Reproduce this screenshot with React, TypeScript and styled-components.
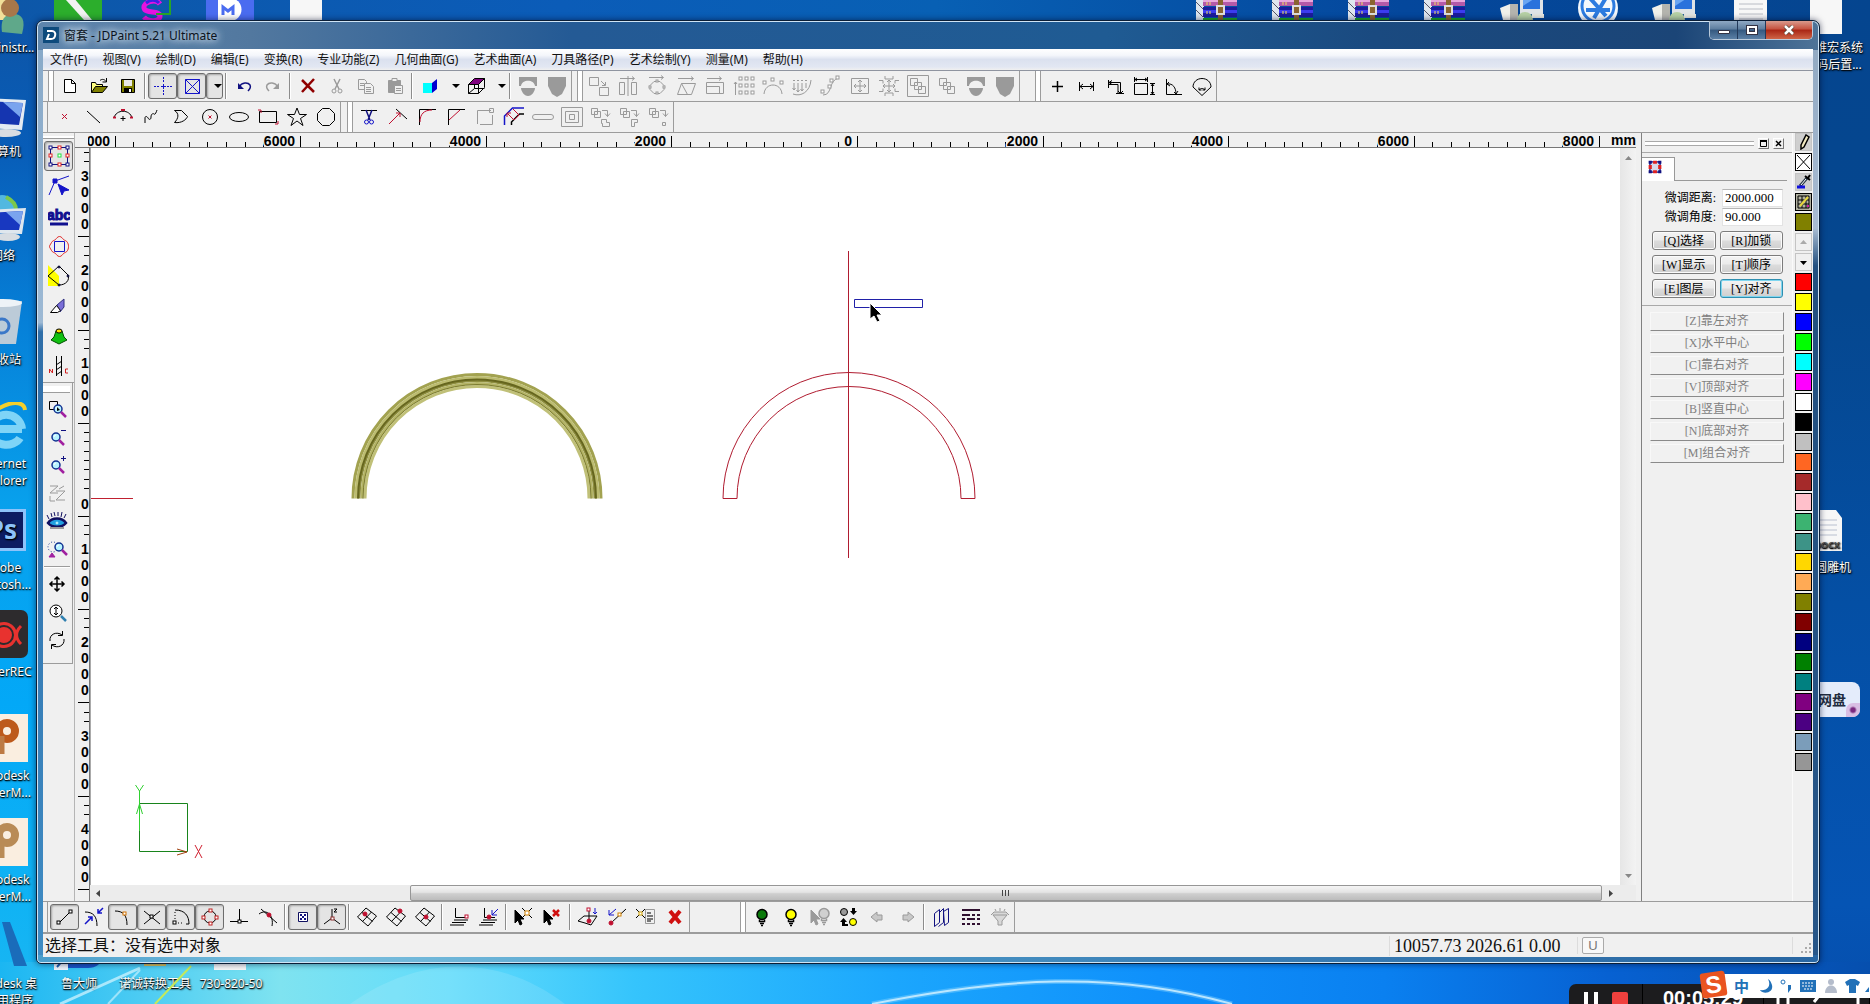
import React from "react";
import styled, { createGlobalStyle, css } from "styled-components";

const UI = `"Noto Sans", "Noto Sans CJK SC", sans-serif`;
const SONG = `"Liberation Serif", "Noto Sans CJK SC", serif`;
const FACE = "#f0f0f0";
const LINE = "#9c9c9c";

const GlobalStyle = createGlobalStyle`
  * { box-sizing: border-box; }
  html, body { margin: 0; height: 100%; overflow: hidden; }
  button, input { font: inherit; color: inherit; margin: 0; padding: 0; }
`;

/* ---------- desktop ---------- */

const Desktop = styled.div`
  position: relative;
  height: 100vh;
  overflow: hidden;
  font: 12px/17px ${UI};
  background:
    linear-gradient(90deg, #0d57a8 0, #0b5cb8 30%, #0860b4 50%, #04479c 75%, #05458f 100%) top / 100% 22px no-repeat,
    linear-gradient(90deg, #1bb6f2 0, #4fcdf3 8%, #7fe3f0 15%, #62dcfb 24%, #35c4fc 34%, #1ba6fd 48%, #0f90fb 62%, #0a80f0 74%, #0761d2 86%, #064fae 100%) bottom / 100% 42px no-repeat,
    linear-gradient(180deg, #0e54a5 0, #085db8 15%, #0680d8 32%, #08a0ec 50%, #03a8f7 70%, #10b3f4 90%, #1bb6f2 100%) left / 50% 100% no-repeat,
    linear-gradient(180deg, #05458f 0, #05478f 30%, #044fa4 60%, #0554b4 90%, #064fae 100%);
`;

const Streaks = styled.svg`
  position: absolute;
  left: 0;
  bottom: 0;
`;

const IconGrid = styled.div`
  display: grid;
  grid-template-columns: repeat(25, 76px);
  grid-template-rows: repeat(10, 104px);
  margin: -14px 0 0 -35px;
`;

const Shortcut = styled.a<{ $col: number; $row: number }>`
  grid-column: ${(p) => p.$col + 1};
  grid-row: ${(p) => p.$row + 1};
  display: flex;
  flex-direction: column;
  align-items: center;
  gap: 5px;
  color: #fff;
  text-align: center;
  text-decoration: none;
  white-space: pre;
  text-shadow: 1px 1px 2px #000, 0 1px 1px #000;
`;

const Pan = styled.div`
  position: absolute;
  right: 10px;
  top: 682px;
  width: 72px;
  height: 35px;
  display: flex;
  align-items: center;
  padding-left: 30px;
  border-radius: 8px;
  background: #e4ecfb;
  color: #222c40;
  font-size: 14px;
  font-weight: 700;
`;

const PanDot = styled.i`
  position: absolute;
  right: 0;
  bottom: 0;
  width: 14px;
  height: 14px;
  border-radius: 7px 0 7px 0;
  background: radial-gradient(circle, #7a2a80 0 2px, #d9bfe4 4px);
`;

/* ---------- window ---------- */

const Win = styled.main`
  position: absolute;
  inset: 20px 50px 40px 36px;
  display: flex;
  flex-direction: column;
  padding: 0 6px 6px;
  border: 1px solid #0b1e36;
  border-radius: 7px 7px 5px 5px;
  box-shadow: inset 0 0 0 1px #cfe4f5, 0 0 6px rgba(0, 10, 40, 0.6);
  background:
    linear-gradient(90deg, #5f86ad 0, #52789f 12%, #245a95 30%, #1f5b93 60%, #1a4a80 75%, #1b4577 92%, #4f7498 100%) top / 100% 29px no-repeat,
    linear-gradient(90deg, #4a9ecb 0, #7cc0de 15%, #4f9fcc 40%, #3a7fb6 65%, #2866a2 100%) bottom / 100% 8px no-repeat,
    linear-gradient(180deg, #86a8c8 0, #9db9d4 32%, #2f6ea8 33%, #3f8cc4 100%) left / 50% 100% no-repeat,
    linear-gradient(180deg, #8fa7c0 0, #a9bcd2 22%, #23507f 26%, #275688 100%);
`;

const TitleBar = styled.header`
  display: flex;
  align-items: center;
  gap: 5px;
  height: 28px;
  flex: none;
  color: #0b1320;
`;

const Title = styled.h1`
  flex: 1;
  margin: 0;
  font: 12px/17px ${UI};
  text-shadow: 0 0 6px #c5d6e6, 0 0 8px #c5d6e6, 0 0 10px #c5d6e6;
`;

const Caption = styled.div`
  display: flex;
  align-self: flex-start;
  border: 1px solid #b9c9da;
  border-top: 0;
  border-radius: 0 0 5px 5px;
  overflow: hidden;
`;

const CaptionButton = styled.button<{ $close?: boolean }>`
  display: grid;
  place-items: center;
  width: ${(p) => (p.$close ? 46 : 28)}px;
  height: 18px;
  border: 0;
  border-right: ${(p) => (p.$close ? 0 : 1)}px solid #22395a;
  background: ${(p) =>
    p.$close
      ? "linear-gradient(#d99a8c, #c5523f 45%, #a92514 50%, #cf6546)"
      : "linear-gradient(#8fa9c4, #5d7d9f 45%, #34587f 50%, #5b80a6)"};
`;

const MenuBar = styled.nav`
  display: flex;
  align-items: center;
  height: 22px;
  flex: none;
  border-bottom: 1px solid #8f94a0;
  background: linear-gradient(#fff, #f4f6fb 30%, #dbe1ef 50%, #e2e7f3 85%, #f0f0f0);
`;

const MenuItem = styled.button`
  padding: 0 8px 0 7px;
  border: 0;
  background: none;
  white-space: nowrap;
  color: #111;
`;

const ToolRow = styled.div<{ $start: number }>`
  display: flex;
  height: 31px;
  flex: none;
  padding-left: ${(p) => p.$start}px;
  border-bottom: 1px solid ${LINE};
  background: ${FACE};
`;

const ToolGroup = styled.div<{ $gap?: number }>`
  display: flex;
  align-items: center;
  margin-left: ${(p) => p.$gap ?? 0}px;
  border-right: 1px solid ${LINE};
`;

const Grip = styled.i<{ $single?: boolean }>`
  align-self: stretch;
  width: ${(p) => (p.$single ? 1 : 6)}px;
  margin-right: ${(p) => (p.$single ? 2 : 1)}px;
  border: solid ${LINE};
  border-width: 0 1px 0 ${(p) => (p.$single ? 0 : 1)}px;
  background: #fff;
`;

const Sep = styled.i`
  width: 6px;
  height: 26px;
  background: linear-gradient(90deg, transparent 2px, #8c8c8c 2px 3px, #fff 3px 4px, transparent 4px);
`;

const ToolButton = styled.button<{ $on?: boolean; $w?: number; $h?: number }>`
  display: grid;
  place-items: center;
  flex: none;
  width: ${(p) => p.$w ?? 29}px;
  height: ${(p) => p.$h ?? 26}px;
  border: 1px solid transparent;
  border-radius: 3px;
  background: none;
  ${(p) =>
    p.$on &&
    css`
      border-color: #6d6d6d;
      background: #e4e4e4;
      box-shadow: inset 1px 1px 2px #a5a5a5;
    `}
`;

const Work = styled.div`
  display: flex;
  flex: 1;
  min-height: 0;
  background: ${FACE};
  border-bottom: 1px solid ${LINE};
`;

const LeftBar = styled.div`
  width: 32px;
  flex: none;
  border-right: 1px solid #b5b5b5;
`;

const SideTools = styled.div<{ $second?: boolean }>`
  display: flex;
  flex-direction: column;
  align-items: center;
  width: ${(p) => (p.$second ? 30 : 31)}px;
  padding: ${(p) => (p.$second ? "0 2px 9px 0" : "0 0 1px")};
  border-bottom: 1px solid ${LINE};
  border-right: ${(p) => (p.$second ? 1 : 0)}px solid ${LINE};
`;

const SideGrip = styled.i<{ $top: number }>`
  align-self: stretch;
  height: ${(p) => p.$top}px;
  margin-bottom: 2px;
  background: linear-gradient(${FACE} 3px, #fff 3px);
  border-bottom: 1px solid ${LINE};
`;

const SideSep = styled.i`
  width: 26px;
  height: 7px;
  background: linear-gradient(transparent 3px, ${LINE} 3px 4px, #fff 4px 5px, transparent 5px);
`;

const Viewport = styled.section`
  display: grid;
  flex: 1;
  min-width: 0;
  grid-template: 15px 1fr 16px / 15px 1fr 16px;
  padding-right: 5px;
`;

const TopRuler = styled.div`
  grid-column: 1 / 4;
  display: flex;
  padding-left: 13px;
  background: ${FACE};
  border-bottom: 1px solid #777;
  font: bold 14px/14px "Liberation Sans", sans-serif;
  overflow: hidden;
`;

const SideRuler = styled.svg`
  grid-row: 2 / 4;
  width: 15px;
  height: 100%;
  border-right: 1px solid #777;
`;

const Canvas = styled.div`
  position: relative;
  overflow: hidden;
  background: #fff;
  border-left: 1px solid #aaa;
`;

const Drawing = styled.svg`
  display: block;
  width: 100%;
  height: 100%;
`;

const AxisMark = styled.svg`
  position: absolute;
  left: 38px;
  bottom: 20px;
`;

const VScroll = styled.div`
  display: flex;
  flex-direction: column;
  justify-content: space-between;
  align-items: center;
  padding: 2px 0;
  background: linear-gradient(90deg, #e6e6e6, #f3f3f3);
`;

const HScroll = styled.div`
  grid-column: 2 / 4;
  display: flex;
  padding-right: 18px;
  background: #ececec;
`;

const ArrowButton = styled.button`
  display: grid;
  place-items: center;
  width: 16px;
  height: 16px;
  border: 0;
  background: none;
`;

const Track = styled.div`
  flex: 304;
`;

const Thumb = styled.div`
  flex: 1191;
  display: flex;
  justify-content: center;
  align-items: center;
  gap: 2px;
  border: 1px solid #969696;
  border-radius: 2px;
  background: linear-gradient(#f5f5f5, #e4e4e4 45%, #cfcfcf 55%, #bcbcbc);
`;

const ThumbLine = styled.i`
  width: 1px;
  height: 6px;
  background: #444;
`;

/* ---------- right panel ---------- */

const Panel = styled.aside`
  width: 151px;
  flex: none;
  border-left: 1px solid #808080;
  font: 12px/18px ${SONG};
`;

const PanelHead = styled.div`
  display: flex;
  align-items: center;
  gap: 4px;
  height: 20px;
  padding: 2px 8px 0 3px;
  border-bottom: 1px solid #a9a9a9;
`;

const PanelGrip = styled.i`
  flex: 1;
  height: 5px;
  border: solid #a9a9a9;
  border-width: 1px 0;
  background: #fff;
`;

const TinyButton = styled.button`
  display: grid;
  place-items: center;
  width: 11px;
  height: 11px;
  border: 1px solid #fff;
  border-right-color: #777;
  border-bottom-color: #777;
  background: ${FACE};
`;

const TabStrip = styled.div`
  display: flex;
  height: 28px;
  padding-top: 4px;
  margin-right: 5px;
`;

const Tab = styled.button`
  width: 33px;
  height: 24px;
  padding: 0 6px;
  border: 1px solid #999;
  border-width: 1px 1px 0 0;
  background: #fff;
  text-align: left;
`;

const TabRest = styled.i`
  flex: 1;
  border-bottom: 1px solid #999;
`;

const Form = styled.div`
  display: grid;
  grid-template-columns: 1fr 61px;
  align-items: center;
  gap: 1px 6px;
  padding: 8px 9px 0 20px;
`;

const FormLabel = styled.label`
  text-align: right;
  white-space: nowrap;
`;

const Field = styled.input`
  width: 61px;
  height: 18px;
  padding: 0 2px;
  border: 1px solid #e3e3e3;
  border-top-color: #b5b5b5;
  background: #fff;
  font: 13px/16px ${SONG};
`;

const ButtonGrid = styled.div`
  display: grid;
  grid-template-columns: 1fr 1fr;
  gap: 5px 4px;
  padding: 5px 9px 7px 10px;
  border-bottom: 1px solid #a9a9a9;
`;

const PushButton = styled.button<{ $active?: boolean }>`
  height: 19px;
  border: 1px solid ${(p) => (p.$active ? "#2f8fb0" : "#7c7c7c")};
  border-radius: 3px;
  box-shadow: inset 0 0 0 1px ${(p) => (p.$active ? "#7fd6f0" : "#fbfbfb")};
  background: linear-gradient(#f3f3f3, #ebebeb 48%, #dcdcdc 52%, #cfcfcf);
  line-height: 16px;
  white-space: nowrap;
`;

const AlignList = styled.div`
  display: flex;
  flex-direction: column;
  gap: 3px;
  padding: 6px 8px;
`;

const AlignButton = styled.button`
  height: 19px;
  border: 1px solid #f8f8f8;
  border-right-color: #8a8a8a;
  border-bottom-color: #8a8a8a;
  background: #f1f1f1;
  color: #808080;
  line-height: 17px;
`;

const Palette = styled.div`
  display: flex;
  flex-direction: column;
  align-items: center;
  gap: 2px;
  width: 21px;
  flex: none;
  border-left: 1px solid #fafafa;
`;

const Swatch = styled.button<{ $color: string; $plain?: boolean }>`
  display: grid;
  place-items: center;
  width: 17px;
  height: 18px;
  border: 1px solid ${(p) => (p.$plain ? "#c4c4c4" : "#000")};
  background: ${(p) => p.$color};
`;

/* ---------- status ---------- */

const StatusBar = styled.footer`
  display: flex;
  align-items: center;
  height: 24px;
  flex: none;
  border-top: 1px solid ${LINE};
  background: ${FACE};
  font: 16px/20px ${SONG};
  color: #111;
`;

const StatusText = styled.span`
  flex: 1;
  padding-left: 2px;
`;

const Coords = styled.span`
  width: 188px;
  padding-left: 4px;
  border-left: 1px solid #dcdcdc;
  font-size: 18px;
  white-space: nowrap;
`;

const StatusKey = styled.span`
  width: 216px;
  padding-left: 4px;
  border: solid #dcdcdc;
  border-width: 0 1px;
`;

const Key = styled.kbd`
  display: grid;
  place-items: center;
  width: 22px;
  height: 17px;
  border: 1px solid #aaa;
  border-radius: 2px;
  background: #f8f8f8;
  color: #777;
  font: 13px/14px "Liberation Sans", sans-serif;
`;

const SizeGrip = styled.svg`
  width: 20px;
  height: 20px;
`;

/* ---------- recorder and input method ---------- */

const Recorder = styled.div`
  position: absolute;
  right: 0;
  bottom: 0;
  width: 301px;
  height: 20px;
  display: flex;
  align-items: flex-start;
  overflow: hidden;
  border-radius: 7px 0 0 0;
  background: #1c1c1e;
  color: #fff;
  font: bold 20px/20px "Liberation Sans", sans-serif;
`;

const RecorderPart = styled.div<{ $w: number }>`
  display: flex;
  gap: 14px;
  justify-content: center;
  align-items: flex-start;
  width: ${(p) => p.$w}px;
  height: 20px;
  padding-top: 4px;
  border-right: 1px solid #000;
`;

const PauseMark = styled.i`
  width: 14px;
  height: 20px;
  margin-top: 4px;
  border: solid #fff;
  border-width: 0 4px;
`;

const StopMark = styled.i`
  width: 16px;
  height: 20px;
  margin-top: 4px;
  border-radius: 2px;
  background: #f0413e;
`;

const ImeBar = styled.div`
  position: absolute;
  right: 0;
  bottom: 6px;
  width: 160px;
  height: 24px;
  display: flex;
  align-items: center;
  justify-content: space-between;
  padding-left: 24px;
  background: #fff;
  color: #2271b8;
  font-size: 15px;
  font-weight: 700;
`;

const ImeLogo = styled.div`
  position: absolute;
  left: -9px;
  top: -2px;
  width: 25px;
  height: 25px;
  display: grid;
  place-items: center;
  border-radius: 3px;
  background: #ea5420;
  color: #fff;
  font: bold 24px/24px "Liberation Sans", sans-serif;
  transform: rotate(-8deg);
`;

/* ---------- tool icons ---------- */

const G = "#9a9a9a";
const B = "#1414c8";
const R = "#c01030";
const sq = (x: number, y: number, c = "#000", s = 3) => (
  <rect key={`${x}-${y}`} x={x} y={y} width={s} height={s} fill="#fff" stroke={c} />
);
const dot = (x: number, y: number, c = R, r = 2) => <circle cx={x} cy={y} r={r} fill={c} stroke={c} />;
const bulb = (c: string, s = "#000") => (
  <g stroke={s}>
    <circle cx="11" cy="8.500" r="5" fill={c} strokeWidth="1.500" />
    <path d="M8.500 13.500v2h5v-2M9 17.500h4M10 19.500h2" strokeWidth="1.500" />
  </g>
);
const mesh = (x: number, y: number) => (
  <g>
    <path d="M1.500 11 10 2l10.500 8L12 20zM6 6.500l10.500 9M6.500 15.500 15.500 6" />
    {dot(x, y)}
  </g>
);
const cursorPath = "M2 4v13l3-3 2 5 2-1-2-5h4z";
const lens = (cx: number, cy: number) => (
  <g>
    <circle cx={cx} cy={cy} r="4" fill="#b8f4ff" stroke="#103090" strokeWidth="1.500" />
    <path d={`M${cx - 2} ${cy}a2 2 0 0 1 2-2`} stroke="#fff" />
    <path d={`M${cx + 3} ${cy + 3}l5 5`} stroke="#a020a0" strokeWidth="2.500" />
  </g>
);
const half = (
  <g stroke="none" fill={G}>
    <path d="M2 2h18v9h-2c-1-7-13-7-14 0H2z" />
    <path d="M4 13h14c0 3-3 8-7 8s-7-5-7-8z" />
  </g>
);
const shield = <path d="M2 2h18v9l-4 8-5 3-5-3-4-8z" fill={G} stroke="none" />;
const boxes = (c: string) => (
  <g stroke={c}>
    <path d="M3.500 3.500h7v7h-7zM7.500 7.500h7v7h-7zM11.500 11.500h7v7h-7z" />
  </g>
);
const combine = (last: string) => (
  <g stroke={G}>
    <path d="M1.500 2.500h6v6h-6zM4.500 5.500h6v6h-6zM12 4.500h5.500v6M15 7.500l2.500 3 2.500-3" />
    <path d={last} />
  </g>
);

const icons: Record<string, React.ReactNode> = {
  new: <path d="M5.500 4.500h7l4 4v9h-11zM12.500 4.500v4h4" fill="#fff" />,
  open: (
    <g>
      <path d="M3.500 17.500v-10h4l1 2h6v3" fill="#ffff80" />
      <path d="M3.500 17.500l4-6h12l-5 6z" fill="#808000" />
      <path d="M12 5.500c2-2 5-1 6 1M18.500 3v4h-4" />
    </g>
  ),
  save: (
    <g>
      <path d="M4.500 4.500h13v13h-13z" fill="#808000" />
      <path d="M7 5h8v6H7z" fill="#e8e8e8" stroke="none" />
      <path d="M7 13h8v5H7z" fill="#000" stroke="none" />
      <path d="M12 14h2v3h-2z" fill="#fff" stroke="none" />
    </g>
  ),
  cross: (
    <g stroke={B}>
      <path d="M2 11.500h6M15 11.500h6M11.500 2v6M11.500 15v6" strokeDasharray="2 1" />
      <path d="M9 11.500h5M11.500 9v5" />
    </g>
  ),
  boxx: <path d="M4.500 4.500h14v14h-14zM4.500 4.500l14 14M18.500 4.500l-14 14" stroke={B} />,
  drop: <path d="M7 9h8l-4 4z" fill="#000" stroke="none" />,
  undo: (
    <g stroke="#101080">
      <path d="M6 12c3-5 9-5 11-2 1 2 0 4-2 6" strokeWidth="1.500" />
      <path d="M5 8v6h6z" fill="#101080" stroke="none" />
    </g>
  ),
  redo: (
    <g stroke={G}>
      <path d="M16 12c-3-5-9-5-11-2-1 2 0 4 2 6" strokeWidth="1.500" />
      <path d="M17 8v6h-6z" fill={G} stroke="none" />
    </g>
  ),
  del: <path d="M5 5l12 12M17 4 5 17" stroke="#900000" strokeWidth="2.500" />,
  cut: (
    <g stroke={G}>
      <path d="M8 4l5 10M14 4 9 14" strokeWidth="1.500" />
      <circle cx="8" cy="16" r="2" />
      <circle cx="14" cy="16" r="2" />
    </g>
  ),
  copy: (
    <g stroke={G} fill={FACE}>
      <path d="M3.500 4.500h6l2 2v8h-8zM5 8.500h4M5 10.500h4" />
      <path d="M9.500 8.500h6l3 3v7h-9zM11 12.500h5M11 14.500h5M11 16.500h5" />
    </g>
  ),
  paste: (
    <g stroke={G}>
      <path d="M4.500 5.500h12v12h-12z" fill={G} />
      <path d="M8 3.500h5v3H8z" fill={FACE} />
      <path d="M10.500 10.500h8v8h-8zM12 13.500h5M12 15.500h5" fill={FACE} />
    </g>
  ),
  solid: (
    <g stroke="none">
      <path d="M4 8h9v10H4z" fill="#00ffff" />
      <path d="M13 8l5-4v10l-5 4z" fill="#0000d0" />
    </g>
  ),
  cube: (
    <g>
      <path d="M3.500 9.500l6-6h10l-6 6z" fill="#800080" />
      <path d="M3.500 9.500h10v9h-10zM13.500 9.500l6-6v9l-6 6M9.500 9.500v4h10M3.500 18.500l6-5" />
    </g>
  ),
  half,
  shield,
  move: <path d="M1.500 2.500h9v8h-9zM11.500 12.500h9v8h-9zM13 6l4 4M17.500 7v3.500H14" stroke={G} />,
  mirror: <path d="M2.500 7.500h5v12h-5zM14.500 7.500h5v12h-5zM11 1v20M3 3.500h14M15 1.500l2.500 2-2.500 2" stroke={G} />,
  spin: (
    <g stroke={G}>
      <path d="M8 6.500h6l4 4v4l-4 4H8l-4-4v-4zM3 2.500h14M15 .5l2.500 2-2.500 2" />
      {[[10, 5], [10, 17], [3, 11], [17, 11]].map(([x, y]) => sq(x, y, G, 2))}
    </g>
  ),
  skew: <path d="M2.500 19.500l4-11h14l-4 11zM6.500 8.500l6 11 M3 3.500h15M16 1.500l2.500 2-2.500 2" stroke={G} />,
  scale: <path d="M2.500 7.500h17v11h-17zM2.500 11.500h13v7M3 3.500h14M15 1.500l2.500 2-2.500 2" stroke={G} />,
  array: (
    <g stroke={G}>
      {[6, 12, 18].map((x) => [2, 9, 16].map((y) => sq(x, y, G, 3)))}
      <path d="M2.500 20V7M1 9l1.500-2L4 9" />
    </g>
  ),
  arcarr: (
    <g stroke={G}>
      <path d="M2 19c1-12 17-12 18 0" />
      {[[1, 6], [9, 3], [18, 6]].map(([x, y]) => sq(x, y, G))}
    </g>
  ),
  weave: <path d="M3 8v7M7 8v9M11 8v8M15 8v5M2 19c8 3 17-2 18-14M2 5.500h2M6 5.500h2M10 5.500h2M14 5.500h2M1.500 13l1.500 2 1.500-2M5.500 15 7 17l1.500-2M9.500 14l1.500 2 1.500-2" stroke={G} />,
  curve: (
    <g stroke={G}>
      <path d="M3 20c10 0 5-15 16-17" />
      {[[1, 15], [8, 10], [10, 4], [16, 1]].map(([x, y]) => sq(x, y, G))}
    </g>
  ),
  fit: <path d="M2.500 3.500h17v15h-17zM5 11h12M11 5v12M7 9l-2 2 2 2M15 9l2 2-2 2M9 7l2-2 2 2M9 15l2 2 2-2" stroke={G} />,
  shrink: <path d="M1 5.500h4v3M1 16.500h4v-3M21 5.500h-4v3M21 16.500h-4v-3M7 1v3h8V1M7 21v-3h8v3M5 11h12M11 5v12M7 9l-2 2 2 2M15 9l2 2-2 2M9 7l2-2 2 2M9 15l2 2 2-2" stroke={G} />,
  group: (
    <g>
      <path d="M.5.5h21v21H.5z" stroke={G} />
      {boxes(G)}
    </g>
  ),
  ungroup: boxes(G),
  plus: <path d="M6 11.500h11M11.500 6v11" strokeWidth="1.500" />,
  dimh: <path d="M4.500 7v9M18.500 7v9M5 11.500h13M8 9l-3 2.500L8 14M15 9l3 2.500L15 14" />,
  dimz: <path d="M4.500 5v8M5 7.500h11.500V18M5 9.500h9v9M8 5.500l-3 2L8 9.500M12 18.500h8M14 16l2.500 2.500L19 16" />,
  dimr: <path d="M1.500 8.500h13v11h-13zM1.500 2v5M14.500 2v5M2 4.500h12M4 3 2 4.500 4 6M12 3l2 1.500L12 6M17 8.500h5M17 19.500h5M19.500 9v10M18 11l1.500-2L21 11M18 17l1.500 2 1.500-2" />,
  dima: <path d="M4.500 4v15.500H20M5 9c6-1 9 4 9 10M7 7 5 9l3 2M12 17l2 2 2-3" />,
  dimc: <path d="M11 20.500 2 12c0-5 4-8.500 9-8.500s9 3.500 9 8.500zM8 15c2-2 4-2 6 0M8 12.500V15h2.500M14 12.500V15h-2.500" />,

  pt: <path d="M8 8l5 5M13 8l-5 5" stroke={R} />,
  line: <path d="M4 5l13 12" />,
  arc: (
    <g>
      <path d="M2 12c2-9 16-9 18 0M11 10v5M8.500 12.500h5" />
      <path d="M1 11.500h3M18 11.500h3M9 4h4" stroke={R} strokeWidth="2" />
    </g>
  ),
  spline: <path d="M4 17v-5c0-2 2-2 3 0s3 2 3-1 2-4 3-3 2-1 3-4" />,
  poly: <path d="M4.500 4.500h7l6 6c-1 3-6 7-13 6 4-4 5-9 0-12" />,
  circle: (
    <g>
      <circle cx="11" cy="11" r="7.500" />
      <path d="M9.500 9.500l3 3M12.500 9.500l-3 3" stroke={R} />
    </g>
  ),
  ellipse: <ellipse cx="11" cy="11" rx="9.500" ry="4.500" />,
  rect: (
    <g>
      <path d="M2.500 5.500h17v11h-17z" />
      <path d="M1 4h3v3M18 18h3v-3" stroke={R} />
    </g>
  ),
  star: <path d="M11 2l2.500 6.500h7l-6 4 2.500 7-6-4.500-6 4.500 2.500-7-6-4h7z" />,
  octo: <path d="M7.500 2.500h7l5 5v7l-5 5h-7l-5-5v-7z" />,
  trim: (
    <g>
      <path d="M3 4.500h16" />
      <path d="M8 4l4 10M14 4l-4 10" stroke="#101080" strokeWidth="1.500" />
      <circle cx="8.500" cy="16" r="2" stroke={B} />
      <circle cx="13.500" cy="16" r="2" stroke={B} />
    </g>
  ),
  extend: (
    <g>
      <path d="M9 3l11 10" />
      <path d="M2 18 13 7M9 7h4v4" stroke={R} />
    </g>
  ),
  fillet: (
    <g>
      <path d="M3.500 19V3.500H20" />
      <path d="M4 16c0-8 4-12 12-12" stroke={R} />
    </g>
  ),
  chamfer: (
    <g>
      <path d="M3.500 19V3.500H20" />
      <path d="M4 14 15 4" stroke={R} />
    </g>
  ),
  corner: <path d="M3.500 18V4.500H17M6 18.500h12.500V9M15.500 2.500h4v4h-4z" stroke={G} />,
  offset: (
    <g>
      <path d="M1.500 19v-9l8-8H21" stroke={B} strokeWidth="1.500" />
      <path d="M8.500 19v-3l8-8H21" strokeWidth="1.500" />
      <path d="M5 8l6 6 5-5-6-6M4 11V7h4" stroke={R} />
    </g>
  ),
  slot: <rect x=".5" y="8.500" width="21" height="5" rx="2.500" stroke={G} />,
  nest: <path d="M.5 1.500h21v19H.5zM4.500 5.500h13v11h-13zM8.500 8.500h5v5h-5z" stroke={G} />,
  uni: combine("M11.500 13.500h5v3h3v4h-7v-3h-1z"),
  sub: combine("M12.500 13.500h6v3h-3v4h-3z"),
  inter: combine("M14.500 16.500h3v3h-3z"),

  select: (
    <g>
      <path d="M2.500 2.500h17v17h-17z" stroke="#101080" />
      {[[1, 1], [18, 1], [1, 18], [18, 18]].map(([x, y]) => sq(x, y, "#101080"))}
      {[[10, 1], [1, 9], [18, 9], [10, 18]].map(([x, y]) => sq(x, y, "#e02020"))}
      {sq(10, 9, "#20e040")}
    </g>
  ),
  node: (
    <g stroke={B}>
      <path d="M1 20 7 6l14-5" />
      <path d="M5 4h4v4H5z" fill={B} />
      <path d="M10 9l11 6-5 1-2 4z" fill={B} />
    </g>
  ),
  abc: (
    <g>
      <text x="11" y="15" textAnchor="middle" fontFamily="Liberation Sans" fontWeight="bold" fontSize="14" fill="#101090" stroke="#101090">abc</text>
      <path d="M2 19h18" stroke="#101090" strokeWidth="3" />
    </g>
  ),
  region: (
    <g>
      <path d="M6.500 6.500h10v10h-10z" stroke={B} />
      <path d="M11.500 1.500c2 0 3 2 4 3s3 1 4 3 1 3 1 4 0 2-1 4-3 2-4 3-2 3-4 3-3-2-4-3-3-1-4-3-2-3-2-4 1-2 2-4 3-2 4-3 2-3 4-3z" stroke="#e02020" />
    </g>
  ),
  shape: (
    <g>
      <path d="M0 0l11 11v10H0z" fill="#ffff00" stroke="none" />
      <path d="M0 11 11 1l9 9c2 5-2 10-9 10z" />
      {dot(11, 2, "#101040", 1)}
      {dot(20, 11, "#101040", 1)}
      {dot(11, 20, "#101040", 1)}
    </g>
  ),
  knife: (
    <g>
      <path d="M9 10l7-6v8l-4 5z" fill="#7a6ed8" stroke="#303080" />
      <path d="M2.500 17.500l6-7 4 5-3 2z" fill="#fff" />
    </g>
  ),
  cone: (
    <g>
      <path d="M8 6h6l2 6 3 3-8 4-8-4 3-3z" fill="#10c010" stroke="#005000" />
      <ellipse cx="11" cy="6" rx="3" ry="2" fill="#ffe000" />
    </g>
  ),
  drill: (
    <g>
      <path d="M8.500 1v20M13.500 1v20M8 10l6-4M8 15l6-4M8 20l6-4" />
      <path d="M1.500 18v-4l3 4v-4M20 14h-2.500v4H20" stroke="#d02020" />
    </g>
  ),
  zwin: (
    <g>
      <path d="M3.500 3.500h8v8h-8z" />
      {lens(12, 11)}
      <path d="M11 9v4l3-1z" fill="#000" stroke="none" />
    </g>
  ),
  zout: (
    <g>
      {lens(10, 11)}
      <path d="M15 4.500h5" stroke="#101080" />
    </g>
  ),
  zin: (
    <g>
      {lens(10, 11)}
      <path d="M15 4.500h5M17.500 2v5" stroke="#101080" />
    </g>
  ),
  zz: <path d="M4 4h8l-8 7h8M10 9h9l-9 9h9M18 4l-5 3M4 14v5h5" stroke={G} />,
  eye: (
    <g>
      <path d="M2 13c4-6 14-6 18 0-4 5-14 5-18 0z" fill="#20a0e0" stroke="#101060" strokeWidth="2.500" />
      {dot(11, 13, "#b8f4ff", 1)}
      <path d="M3 9 1 5M6 7 5 3M9 6 8 2M12 6V2M15 7l1-5M18 8l2-4" stroke="#101060" />
      <path d="M4 18h14" stroke={G} strokeWidth="2" />
    </g>
  ),
  zdoc: (
    <g>
      <circle cx="7" cy="9" r="5" strokeDasharray="1 2" stroke="#103090" />
      {lens(13, 9)}
      <path d="M3 19l3-4 3 4z" fill="#a020a0" stroke="#a020a0" />
    </g>
  ),
  pan: <path d="M4 11h14M11 4v14M6.500 8.500 4 11l2.500 2.500M15.500 8.500 18 11l-2.500 2.500M8.500 6.500 11 4l2.500 2.500M8.500 15.500 11 18l2.500-2.500" strokeWidth="1.500" />,
  zdyn: (
    <g>
      <circle cx="10" cy="10" r="6" fill="#fff" />
      <path d="M10 6v8M8 8l2-2 2 2M8 12l2 2 2-2" />
      <path d="M15 15l5 5" stroke="#3080b0" strokeWidth="2.500" />
    </g>
  ),
  rot: <path d="M4 12c-1-7 7-10 12-6M18 10c1 7-7 10-12 6M16.500 2v4.500H12M5.500 20v-4.500H10" />,

  sEnd: (
    <g>
      <path d="M5 17 17 5" />
      {sq(3, 15)}
      {sq(15, 4)}
    </g>
  ),
  sNear: (
    <g>
      <path d="M2 6c8 0 12 4 12 14" />
      <path d="M2 18l7-7M5 11h4v4M20 2l-5 5M15 3v4h4" stroke={B} strokeWidth="1.500" />
    </g>
  ),
  sQuad: (
    <g>
      <path d="M3 5c8 0 12 4 12 14" />
      {sq(11, 6, "#d07000", 3)}
    </g>
  ),
  sInt: (
    <g>
      <path d="M3 5l16 13M3 18 19 5" />
      {sq(9, 9)}
    </g>
  ),
  sCen: (
    <g>
      <path d="M5 4c10 0 14 6 14 14h-3" />
      <path d="M5 6v8M8 17h6" strokeDasharray="1 2" />
      {sq(3, 15)}
    </g>
  ),
  sCirc: (
    <g>
      <circle cx="11" cy="11" r="6" />
      {[[10, 3], [10, 16], [3, 10], [16, 10]].map(([x, y]) => sq(x, y, "#c02020", 3))}
    </g>
  ),
  sPerp: (
    <g>
      <path d="M11.500 3v12M2 15.500h18" />
      {sq(10, 14)}
    </g>
  ),
  sTan: (
    <g>
      <path d="M2 8c8-6 15 2 13 12M4 3l16 14" />
      {dot(12, 9)}
    </g>
  ),
  grid: (
    <g>
      <path d="M6.500 6.500h9v9h-9z" stroke="#101060" fill="#fff" />
      <path d="M8 8h2v2H8zM12 8h2v2h-2zM10 10h2v2h-2zM8 12h2v2H8zM12 12h2v2h-2z" fill="#101080" stroke="none" />
    </g>
  ),
  axes: (
    <g>
      <path d="M11 3v9l-8 6M11 12l8 6M13 3h3l-3 3h3" />
      {sq(10, 11, "#903030")}
    </g>
  ),
  mesh1: mesh(9, 8),
  mesh2: mesh(15, 5),
  mesh3: mesh(12, 11),
  layers1: (
    <g>
      <path d="M6.500 2v9.500H17M5 14h14M3 16.500h14M1 19h14" />
      {sq(16, 9, R)}
    </g>
  ),
  layers2: (
    <g>
      <path d="M6.500 2v9.500H17M5 14h14M3 16.500h14M1 19h14" />
      <path d="M20 3l-6 6M14 4v5h5" stroke={B} />
      {dot(11, 11)}
    </g>
  ),
  pick: (
    <g>
      <path d={cursorPath} fill="#000" />
      <path d="M9 2l10 10M19 2 9 12" />
      {sq(12, 5, "#d08000", 4)}
    </g>
  ),
  unpick: (
    <g>
      <path d={cursorPath} fill="#000" />
      <path d="M11 4l6 6M17 4l-6 6" stroke="#d01010" strokeWidth="2.500" />
    </g>
  ),
  proj: (
    <g>
      <path d="M1 15l6-5h13l-6 9-6-2zM12 5v10" />
      <path d="M18 2v6M16 6l2 2 2-2" stroke={B} />
      {dot(12, 15)}
      {sq(10, 2, R)}
    </g>
  ),
  along: (
    <g>
      <path d="M5 17 20 3" />
      <path d="M10 3 3 9M3 4v5h5" stroke={B} />
      {dot(5, 17)}
      {sq(12, 7, "#d08000")}
    </g>
  ),
  listp: (
    <g>
      <path d="M1 3l9 9M10 3l-9 9" />
      {sq(4, 6, "#d0a000")}
      <path d="M10.500 3.500h9v14h-9z" stroke={G} fill={FACE} />
      <path d="M12 7h4M12 10h6M12 13h6M12 15h4" />
    </g>
  ),
  bigx: <path d="M6 5l10 12M16 5 6 17" stroke="#d01010" strokeWidth="4" />,
  bulbg: bulb("#0b7a0b"),
  bulby: bulb("#ffff00"),
  bulbp: (
    <g>
      <path d={cursorPath} fill={G} stroke={G} />
      <g transform="translate(4 -1)">{bulb("#d0d0d0", G)}</g>
    </g>
  ),
  swap: (
    <g>
      <circle cx="6" cy="6" r="3.500" fill="#999" />
      <circle cx="15" cy="16" r="3.500" fill="#ffff00" />
      <path d="M12 5h2V2h3v3h2l-3.500 4zM2 16l3.500-4L9 16H7v2h3v2H4v-4z" fill="#000" stroke="none" />
    </g>
  ),
  back: <path d="M4 11l6-5v3h5v5h-5v2z" stroke={G} fill="#c8c8c8" />,
  fwd: <path d="M18 11l-6-5v3H7v5h5v2z" stroke={G} fill="#c8c8c8" />,
  books: <path d="M3.500 7.500l5-4v13l-5 4zM8.500 6.500l4-4v14l-5 4M12.500 5.500l5-3v14l-4 3z" stroke="#101080" />,
  dash: <path d="M2 4h18M2 9h8M12 9h3M17 9h3M2 13h3M7 13h8M17 13h3M2 18h3M7 18h3M12 18h3M17 18h3" strokeWidth="2" stroke="#301030" />,
  filter: <path d="M4 9h14l-5 6v4h-4v-4zM2 9l3-3h12l3 3M11 2v3M6 3l1 2M16 3l-1 2" stroke={G} fill="#d8d8d8" />,
};

const Svg22 = ({ name }: { name: string }) => (
  <svg width="22" height="22" viewBox="0 0 22 22" fill="none" stroke="#000" strokeWidth="1" aria-hidden="true">
    {icons[name]}
  </svg>
);

/** Tool names: "|" is a divider, a leading "*" is a pressed tool, "drop" is a narrow arrow. */
const Tools = ({ names }: { names: string }) => (
  <>
    {names.split(" ").map((raw, i) => {
      if (raw === "|") return <Sep key={i} />;
      const on = raw[0] === "*";
      const name = on ? raw.slice(1) : raw;
      return (
        <ToolButton key={i} $on={on} $w={name === "drop" ? 17 : 29} aria-label={name} aria-pressed={on}>
          <Svg22 name={name} />
        </ToolButton>
      );
    })}
  </>
);

const SideButtons = ({ names, height }: { names: string; height: number }) => (
  <>
    {names.split(" ").map((raw) => {
      const on = raw[0] === "*";
      const name = on ? raw.slice(1) : raw;
      return (
        <ToolButton key={name} $on={on} $h={height} aria-label={name} aria-pressed={on}>
          <Svg22 name={name} />
        </ToolButton>
      );
    })}
  </>
);

const Arrow = ({ d, c = "#444" }: { d: string; c?: string }) => (
  <svg width="9" height="9" viewBox="0 0 9 9" aria-hidden="true">
    <path d={d} fill={c} />
  </svg>
);

/* ---------- rulers ---------- */

const HorizontalScale = () => {
  const zero = 769;
  const marks = [-4, -3, -2, -1, 0, 1, 2, 3, 4];
  const minor: number[] = [];
  for (let i = -40; i < 40; i++) if (i % 10 !== 0) minor.push(zero + Math.round(i * 18.56));
  return (
    <svg width="1526" height="14" aria-hidden="true">
      {minor.map((x) => (
        <path key={x} d={`M${x}.5 9v5`} stroke="#000" />
      ))}
      {marks.map((m) => {
        const x = zero + Math.round(m * 185.6);
        return (
          <g key={m}>
            <text x={x - 5} y="13" textAnchor="end" stroke={FACE} strokeWidth="3" paintOrder="stroke">
              {Math.abs(m) * 2000}
            </text>
            <path d={`M${x}.5 3v11`} stroke="#000" />
          </g>
        );
      })}
    </svg>
  );
};

const VerticalScale = () => {
  const zero = 368;
  return (
    <SideRuler aria-hidden="true" fontFamily="Liberation Sans" fontWeight="bold" fontSize="14">
      {[-3, -2, -1, 0, 1, 2, 3, 4].map((m) => {
        const y = zero + Math.round(m * 93.2);
        const digits = String(Math.abs(m) * 1000).split("");
        const minors = m === 0 ? [9, 8, 7, 6, 5, 4, 3] : [9, 8];
        return (
          <g key={m}>
            <path d={`M3 ${y}.5h11`} stroke="#000" />
            {minors.map((k) => (
              <path key={k} d={`M9 ${y - Math.round(k * 9.32)}.5h5`} stroke="#000" />
            ))}
            {digits.map((d, i) => (
              <text key={i} x="6" y={y - 7 - 16 * (digits.length - 1 - i)}>
                {d}
              </text>
            ))}
          </g>
        );
      })}
    </SideRuler>
  );
};

/* ---------- drawing ---------- */

const arch = (cx: number, r: number) => `M${cx - r} 350.500a${r} ${r} 0 0 1 ${2 * r} 0`;

const CanvasDrawing = () => (
  <Drawing fill="none" aria-label="窗套">
    <path d="M0 350.500h42" stroke="#c02030" />
    {[
      [124, 3, "#a2a250"],
      [121, 3, "#bcbc70"],
      [118, 3, "#8e8e40"],
      [115, 3, "#b4b466"],
      [112, 3, "#c0c078"],
    ].map(([r, w, c]) => (
      <path key={r} d={arch(386, r as number)} stroke={c as string} strokeWidth={w} />
    ))}
    <path d={arch(386, 119)} stroke="#66661e" strokeWidth="2" />
    <path d={arch(386, 114)} stroke="#7c7c32" />
    <g stroke="#b01c30">
      <path d="M757.500 103v307" />
      <path d={`${arch(758, 126)}h-14a112 112 0 0 0-224 0z`} />
    </g>
    <path d="M763.500 151.500h68v8h-68z" stroke="#2020a8" />
    <path d="M779 155v16l4-3 3 6 3-1-3-6h5z" fill="#000" stroke="#fff" />
  </Drawing>
);

const Axis = () => (
  <AxisMark width="80" height="84" fill="none">
    <path d="M10.500 22.500h48v48h-48z" stroke="#18841c" />
    <path d="M10.500 50V10l-4-6M10.500 10l4-6M7.500 33l3-10 3 10" stroke="#30d030" />
    <path d="M48 68l10 3-10 3" stroke="#a04010" />
    <path d="M66 64l7 13M73 64l-7 13" stroke="#d02030" />
  </AxisMark>
);

/* ---------- desktop icon art ---------- */

const art: Record<string, React.ReactNode> = {
  user: (
    <g>
      <path d="M0 0h34v34H0z" fill="#f1df9a" />
      <path d="M24 46c-2-14 4-18 12-18s12 6 8 20z" fill="#5fa88a" />
      <circle cx="32" cy="22" r="9" fill="#a8774a" />
    </g>
  ),
  pc: (
    <g>
      <path d="M6 8l42 2-4 30-38-2z" fill="#e3ebf2" />
      <path d="M9 11l36 2-4 22-32-2z" fill="#1535b0" />
      <path d="M25 12l20 1-3 14z" fill="#7aa4ee" />
      <ellipse cx="28" cy="43" rx="15" ry="4" fill="#d8dde2" />
    </g>
  ),
  net: (
    <g>
      <circle cx="24" cy="14" r="13" fill="#52b8e0" />
      <path d="M28 3c6 3 10 8 10 13" stroke="#7cc84a" strokeWidth="4" fill="none" />
      <path d="M8 16l40-2-4 26-36-1z" fill="#dfe7ee" />
      <path d="M10 19l35-2-4 19-31 0z" fill="#1838c0" />
      <path d="M28 18l17-1-3 14z" fill="#7aa4ee" />
      <ellipse cx="30" cy="43" rx="12" ry="4" fill="#d8dde2" />
    </g>
  ),
  bin: (
    <g>
      <path d="M6 3h38l-6 43H12z" fill="#bccbd8" />
      <ellipse cx="25" cy="5" rx="19" ry="4" fill="#eef3f7" />
      <circle cx="24" cy="28" r="7" fill="none" stroke="#3b78c8" strokeWidth="3" />
    </g>
  ),
  ie: (
    <g fill="none">
      <path d="M44 27H14c1-20 28-18 30 0M42 36c-6 10-28 10-29-8" stroke="#7fd4f7" strokeWidth="8" />
      <path d="M2 24C22-2 46-4 47 8" stroke="#f3cf2c" strokeWidth="4" />
    </g>
  ),
  ps: (
    <g>
      <path d="M0 3h48v42H0z" fill="#8dc3fa" />
      <path d="M3 6h42v36H3z" fill="#0c1c62" />
      <text x="39" y="33" textAnchor="end" fontSize="26" fontWeight="bold" fill="#8dc3fa" fontFamily="Noto Sans">Ps</text>
    </g>
  ),
  rec: (
    <g>
      <rect width="50" height="48" rx="7" fill="#2d2b2d" />
      <circle cx="26" cy="25" r="13" fill="#e8322f" />
      <circle cx="26" cy="25" r="9" fill="none" stroke="#2d2b2d" strokeWidth="2" />
      <path d="M43 16c-6 6-6 12 0 18" stroke="#e8322f" strokeWidth="3" fill="none" />
    </g>
  ),
  pm1: (
    <g>
      <path d="M0 0h50v48H0z" fill="#faeee0" />
      <circle cx="29" cy="17" r="8" fill="none" stroke="#bd5a1c" strokeWidth="8" />
      <path d="M23 22v18" stroke="#bd7a44" strokeWidth="7" />
    </g>
  ),
  pm2: (
    <g>
      <path d="M0 0h50v48H0z" fill="#faeee0" />
      <circle cx="29" cy="17" r="8" fill="none" stroke="#b98b56" strokeWidth="8" />
      <path d="M23 22v18" stroke="#b98b56" strokeWidth="7" />
    </g>
  ),
  adsk: <path d="M24 0h8l17 44H36z" fill="#1a6cba" />,
  green: (
    <g>
      <path d="M0 0h48v40H0z" fill="#2cae2c" />
      <path d="M12 14l18 20h8L20 12z" fill="#f2f2f2" />
    </g>
  ),
  snake: (
    <g fill="none">
      <path d="M30 18c-4-6-17-2-16 4s16 2 16 8-12 6-16 1" stroke="#e613e0" strokeWidth="5" />
      <path d="M16 17c5-4 10-3 13 0" stroke="#3a22e6" strokeWidth="3" />
      <path d="M26 28h14V10" stroke="#27a527" strokeWidth="2" />
    </g>
  ),
  dapp: (
    <g>
      <path d="M0 0h48v38H0z" fill="#4a6cf0" />
      <path d="M12 12h12a11 11 0 0 1 0 23H12z" fill="#fff" />
      <path d="M17 29v-8l5 4 5-4v8" stroke="#4a6cf0" strokeWidth="3" fill="none" />
    </g>
  ),
  file: <path d="M8 0h24l8 12v36H8z" fill="#f7f7f7" />,
  doc: (
    <g>
      <path d="M8 0h33v48H8z" fill="#f7f7f7" />
      <path d="M13 18h24M13 23h24M13 28h24M13 33h24" stroke="#b9bcc4" />
    </g>
  ),
  docx: (
    <g>
      <path d="M8 4h26l6 8v33H8z" fill="#f7f7f7" />
      <path d="M13 14h22M13 19h22M13 24h22M13 29h22" stroke="#b9c0cf" />
      <text x="38" y="42" textAnchor="end" fontSize="9" fontWeight="bold" fill="#555" fontFamily="Noto Sans">DOCX</text>
    </g>
  ),
  rar: (
    <g>
      <path d="M2 10l8 4v21H2z" fill="#dfe6ee" />
      <path d="M2 16l7 7M2 24l7 7" stroke="#556" />
      <path d="M9 10h34v10H9z" fill="#b45aa8" />
      <path d="M9 13h34v3H9z" fill="#e8a8dc" />
      <path d="M9 21h34v10H9z" fill="#1c1c9c" />
      <path d="M9 24h34v3H9z" fill="#3c3cf0" />
      <path d="M9 32h34v4H9z" fill="#1ea51e" />
      <path d="M13 16v3M16 16v3M13 25v3M16 25v3" stroke="#f0e060" />
      <path d="M24 8h5v28h-5z" fill="#8a6430" />
      <path d="M23 20h7v8h-7z" fill="none" stroke="#ddd" strokeWidth="2" />
    </g>
  ),
  setup: (
    <g>
      <path d="M22 6h23v22H22z" fill="#dfe3e6" />
      <path d="M25 9h17v14H25z" fill="#2a72dc" />
      <path d="M25 9h17L25 20z" fill="#6aa6f2" />
      <path d="M2 22l10-4v20H6z" fill="#f0f0ea" />
      <path d="M12 18h8v20h-8z" fill="#b4b4ae" />
      <circle cx="27" cy="34" r="8" fill="#b6d0a4" />
      <path d="M34 28h12v4H34z" fill="#e6e6e0" />
    </g>
  ),
  globe: (
    <g fill="none">
      <circle cx="24" cy="22" r="20" fill="#f4f8fc" />
      <circle cx="24" cy="20" r="16" stroke="#2c7be0" strokeWidth="3" />
      <path d="M14 10l18 20M33 10 20 32M12 24h24" stroke="#2c7be0" strokeWidth="4" />
    </g>
  ),
  blue: (
    <g>
      <path d="M0 36h14v12H0z" fill="#eef4fb" />
      <path d="M14 34h34c0 8-6 12-14 12H14z" fill="#1a55c8" />
      <path d="M3 45l6-7M5 38h4v4" stroke="#2060b0" strokeWidth="2" fill="none" />
    </g>
  ),
  gold: <path d="M14 30h22v14H14z" fill="#d8c05a" />,
};

const shortcuts: [number, number, string, string][] = [
  [0, 0, "user", "Administr..."],
  [0, 1, "pc", "计算机"],
  [0, 2, "net", "网络"],
  [0, 3, "bin", "回收站"],
  [0, 4, "ie", "Internet\nExplorer"],
  [0, 5, "ps", "Adobe\nPhotosh..."],
  [0, 6, "rec", "PowerREC"],
  [0, 7, "pm1", "Autodesk\nPowerM..."],
  [0, 8, "pm2", "Autodesk\nPowerM..."],
  [0, 9, "adsk", "Autodesk 桌\n面应用程序"],
  [1, 0, "green", ""],
  [2, 0, "snake", ""],
  [3, 0, "dapp", ""],
  [4, 0, "file", ""],
  [1, 9, "blue", "鲁大师"],
  [2, 9, "gold", "诺诚转换工具"],
  [3, 9, "file", "730-820-50"],
  [16, 0, "rar", ""],
  [17, 0, "rar", ""],
  [18, 0, "rar", ""],
  [19, 0, "rar", ""],
  [20, 0, "setup", ""],
  [21, 0, "globe", ""],
  [22, 0, "setup", ""],
  [23, 0, "doc", ""],
  [24, 0, "file", "\u3000\u3000维宏系统\n\u3000代码后置..."],
  [24, 5, "docx", "\u3000圆雕机"],
];

const menus = [
  "文件(F)", "视图(V)", "绘制(D)", "编辑(E)", "变换(R)", "专业功能(Z)", "几何曲面(G)",
  "艺术曲面(A)", "刀具路径(P)", "艺术绘制(Y)", "测量(M)", "帮助(H)",
];

const modes = ["[Q]选择", "[R]加锁", "[W]显示", "[T]顺序", "[E]图层", "[Y]对齐"];
const aligns = ["[Z]靠左对齐", "[X]水平中心", "[C]靠右对齐", "[V]顶部对齐", "[B]竖直中心", "[N]底部对齐", "[M]组合对齐"];
const colors = [
  "#ff0000", "#ffff00", "#0000ff", "#00ff00", "#00ffff", "#ff00ff", "#ffffff", "#000000", "#c0c0c0",
  "#ff6622", "#a52a2a", "#ffc0cb", "#3cb371", "#3d9387", "#ffd700", "#ffaa55", "#808000", "#800000",
  "#000080", "#008000", "#008080", "#800080", "#4b0082", "#7b9dba", "#969696",
];

const PaletteTool = ({ children }: { children: React.ReactNode }) => (
  <svg width="15" height="16" viewBox="0 0 15 16" fill="none" stroke="#000" aria-hidden="true">
    {children}
  </svg>
);

export default function App() {
  return (
    <Desktop>
      <GlobalStyle />
      <Streaks width="1870" height="44" viewBox="0 0 1870 44" fill="none" aria-hidden="true">
        <path d="M350 44C420-6 500-6 565 44z" fill="#fff" opacity="0.12" />
        <path d="M60 44 140 8" stroke="#d8f6ff" strokeWidth="3" opacity="0.7" />
        <path d="M108 44l32-34" stroke="#d8f6ff" strokeWidth="2" opacity="0.6" />
        <path d="M155 44l36-38" stroke="#c5ea5a" strokeWidth="2" />
        <path d="M872 44c130-26 240-34 360 0" stroke="#8fd8ff" strokeWidth="5" opacity="0.4" />
        <path d="M872 44c130-26 240-34 360 0" stroke="#c8ecff" strokeWidth="2" opacity="0.9" />
      </Streaks>
      <IconGrid>
        {shortcuts.map(([col, row, kind, label]) => (
          <Shortcut key={`${col}-${row}`} href="#" $col={col} $row={row} aria-label={label || kind}>
            <svg width="50" height="48" viewBox="0 0 50 48" aria-hidden="true">
              {art[kind]}
            </svg>
            {label}
          </Shortcut>
        ))}
      </IconGrid>
      <Pan>
        网盘
        <PanDot />
      </Pan>

      <Win>
        <TitleBar>
          <svg width="16" height="16" viewBox="0 0 16 16" fill="none" aria-hidden="true">
            <path d="M0 0h16v16H0z" fill="#0d4a7c" />
            <path d="M4 4h5c5 0 4 8-1 8H4l2-5" stroke="#fff" strokeWidth="2" />
          </svg>
          <Title>窗套 - JDPaint 5.21 Ultimate</Title>
          <Caption>
            <CaptionButton aria-label="最小化">
              <svg width="12" height="10">
                <path d="M.5 5.500h11v3H.5z" fill="#fff" stroke="#334" />
              </svg>
            </CaptionButton>
            <CaptionButton aria-label="最大化">
              <svg width="12" height="10" fill="none">
                <path d="M2 2h8v6H2z" stroke="#334" strokeWidth="4" />
                <path d="M2 2h8v6H2z" stroke="#fff" strokeWidth="2" />
              </svg>
            </CaptionButton>
            <CaptionButton $close aria-label="关闭">
              <svg width="12" height="10" fill="none">
                <path d="M2 1l8 8M10 1 2 9" stroke="#543" strokeWidth="4" />
                <path d="M2 1l8 8M10 1 2 9" stroke="#fff" strokeWidth="2.500" />
              </svg>
            </CaptionButton>
          </Caption>
        </TitleBar>

        <MenuBar>
          {menus.map((m) => (
            <MenuItem key={m}>{m}</MenuItem>
          ))}
        </MenuBar>

        <ToolRow $start={5}>
          <ToolGroup>
            <Grip />
            <Tools names="new open save | *cross *boxx *drop | undo redo | del cut copy paste | solid drop cube drop | half shield" />
          </ToolGroup>
          <ToolGroup $gap={5}>
            <Grip />
            <Tools names="move mirror spin skew scale array arcarr weave curve fit shrink group ungroup half shield" />
          </ToolGroup>
          <ToolGroup $gap={15}>
            <Grip />
            <Tools names="plus dimh dimz dimr dima dimc" />
          </ToolGroup>
        </ToolRow>

        <ToolRow $start={4}>
          <ToolGroup>
            <Grip $single />
            <Tools names="pt line arc spline poly circle ellipse rect star octo" />
          </ToolGroup>
          <ToolGroup $gap={6}>
            <Grip />
            <Tools names="trim extend fillet chamfer corner offset slot nest uni sub inter" />
          </ToolGroup>
        </ToolRow>

        <Work>
          <LeftBar>
            <SideTools>
              <SideGrip $top={6} />
              <SideButtons height={30} names="*select node abc region shape knife cone drill" />
            </SideTools>
            <SideTools $second>
              <SideGrip $top={10} />
              <SideButtons height={28} names="zwin zout zin zz eye zdoc" />
              <SideSep />
              <SideButtons height={28} names="pan zdyn rot" />
            </SideTools>
          </LeftBar>

          <Viewport>
            <TopRuler>
              <HorizontalScale />
              mm
            </TopRuler>
            <VerticalScale />
            <Canvas>
              <CanvasDrawing />
              <Axis />
            </Canvas>
            <VScroll>
              <ArrowButton aria-label="向上滚动">
                <Arrow d="M1 6l3.500-4L8 6z" c="#888" />
              </ArrowButton>
              <ArrowButton aria-label="向下滚动">
                <Arrow d="M1 3l3.500 4L8 3z" c="#888" />
              </ArrowButton>
            </VScroll>
            <HScroll>
              <ArrowButton aria-label="向左滚动">
                <Arrow d="M6 1 2 4.500 6 8z" />
              </ArrowButton>
              <Track />
              <Thumb>
                <ThumbLine />
                <ThumbLine />
                <ThumbLine />
              </Thumb>
              <ArrowButton aria-label="向右滚动">
                <Arrow d="M3 1l4 3.500L3 8z" />
              </ArrowButton>
            </HScroll>
          </Viewport>

          <Panel>
            <PanelHead>
              <PanelGrip />
              <TinyButton aria-label="浮动">
                <svg width="7" height="7" fill="none">
                  <path d="M.5 1h6v5.500h-6z" stroke="#000" />
                  <path d="M0 1h7" stroke="#000" strokeWidth="2" />
                </svg>
              </TinyButton>
              <TinyButton aria-label="关闭面板">
                <svg width="7" height="7">
                  <path d="M1 1l5 5M6 1 1 6" stroke="#000" strokeWidth="1.500" />
                </svg>
              </TinyButton>
            </PanelHead>
            <TabStrip>
              <Tab aria-label="选择">
                <svg width="14" height="14" viewBox="0 0 22 22" fill="#d8d8e8">
                  <path d="M3 3h16v16H3z" stroke="#101080" strokeWidth="2" />
                  <path d="M1 1h5v5H1zM16 1h5v5h-5zM1 16h5v5H1zM16 16h5v5h-5z" fill="#101080" />
                  <path d="M8 1h6v5H8zM8 16h6v5H8zM1 8h5v6H1zM16 8h5v6h-5z" fill="#e02020" />
                </svg>
              </Tab>
              <TabRest />
            </TabStrip>
            <Form>
              <FormLabel htmlFor="dist">微调距离:</FormLabel>
              <Field id="dist" defaultValue="2000.000" />
              <FormLabel htmlFor="angle">微调角度:</FormLabel>
              <Field id="angle" defaultValue="90.000" />
            </Form>
            <ButtonGrid>
              {modes.map((m) => (
                <PushButton key={m} $active={m === "[Y]对齐"}>
                  {m}
                </PushButton>
              ))}
            </ButtonGrid>
            <AlignList>
              {aligns.map((a) => (
                <AlignButton key={a} disabled>
                  {a}
                </AlignButton>
              ))}
            </AlignList>
          </Panel>

          <Palette>
            <Swatch $color="#cfcfcf" $plain aria-label="画笔">
              <PaletteTool>
                <path d="M5 11 10 1l3 2-5 10-3 2z" fill="#f0e8c0" strokeWidth="1.500" />
              </PaletteTool>
            </Swatch>
            <Swatch $color="#fff" aria-label="无色">
              <PaletteTool>
                <path d="M1 1l13 14M14 1 1 15" />
              </PaletteTool>
            </Swatch>
            <Swatch $color="#cfcfcf" $plain aria-label="吸管">
              <PaletteTool>
                <path d="M4 12l7-8" strokeWidth="3" stroke="#234" />
                <path d="M5 11l5-6" stroke="#fff" />
                <path d="M9 2l5 4M12 4l2-3" strokeWidth="2" />
                <path d="M1 13h8" strokeWidth="3" stroke="#1010e0" />
              </PaletteTool>
            </Swatch>
            <Swatch $color="#b0b0a0" aria-label="调色板">
              <PaletteTool>
                <path d="M2 2h11v12H2zM2 6h11M2 10h11M6 2v12M10 2v12" />
                <path d="M4 12 12 3" stroke="#e8d840" strokeWidth="2" />
                <path d="M11 12h2" stroke="#d020a0" strokeWidth="2" />
              </PaletteTool>
            </Swatch>
            <Swatch $color="#808000" aria-label="当前颜色" />
            <Swatch $color={FACE} $plain aria-label="上翻">
              <Arrow d="M1 6l3.500-4L8 6z" c="#aaa" />
            </Swatch>
            <Swatch $color={FACE} $plain aria-label="下翻">
              <Arrow d="M1 3l3.500 4L8 3z" c="#000" />
            </Swatch>
            {colors.map((c) => (
              <Swatch key={c} $color={c} aria-label={c} />
            ))}
          </Palette>
        </Work>

        <ToolRow $start={4}>
          <ToolGroup>
            <Grip $single />
            <Tools names="*sEnd sNear *sQuad *sInt *sCen *sCirc sPerp sTan | *grid *axes | mesh1 mesh2 mesh3 | layers1 layers2 | pick unpick | proj along listp bigx" />
          </ToolGroup>
          <ToolGroup $gap={50}>
            <Grip />
            <Tools names="bulbg bulby bulbp swap back fwd | books dash filter" />
          </ToolGroup>
        </ToolRow>

        <StatusBar>
          <StatusText>选择工具：没有选中对象</StatusText>
          <Coords>10057.73 2026.61 0.00</Coords>
          <StatusKey>
            <Key>U</Key>
          </StatusKey>
          <SizeGrip viewBox="0 0 20 20" aria-hidden="true">
            <path d="M16 8h2M12 12h2M16 12h2M8 16h2M12 16h2M16 16h2" stroke="#aaa" strokeWidth="2" />
          </SizeGrip>
        </StatusBar>
      </Win>

      <Recorder>
        <RecorderPart $w={74}>
          <PauseMark />
          <StopMark />
        </RecorderPart>
        <RecorderPart $w={121}>00:05:29</RecorderPart>
        <RecorderPart $w={106}>
          <svg width="90" height="16" viewBox="0 0 90 16" fill="none" stroke="#fff" strokeWidth="3" aria-hidden="true">
            <path d="M6 16V6h10v10M42 14 50 4M72 6h14v10" />
          </svg>
        </RecorderPart>
      </Recorder>
      <ImeBar>
        <ImeLogo>S</ImeLogo>
        <span>中</span>
        <svg width="112" height="18" viewBox="0 0 112 18" fill="#2271b8" aria-hidden="true">
          <path d="M10 2c4 8-2 12-8 11 3 5 14 3 12-5-1-3-2-5-4-6z" />
          <circle cx="25" cy="5" r="2" fill="none" stroke="#2271b8" />
          <path d="M30 8h3v4l-3 4z" />
          <path d="M42 3h16v12H42z" />
          <path d="M44 6h12M44 9h12M46 12h8" stroke="#fff" strokeDasharray="2 1" />
          <circle cx="73" cy="5" r="3" fill="#b4bccb" />
          <path d="M67 16c0-10 12-10 12 0z" fill="#b4bccb" />
          <path d="M87 5l5-3h5l5 3-2 4-2-1v8h-7V8l-2 1z" />
          <path d="M107 15l4-5v5z" />
        </svg>
      </ImeBar>
    </Desktop>
  );
}
